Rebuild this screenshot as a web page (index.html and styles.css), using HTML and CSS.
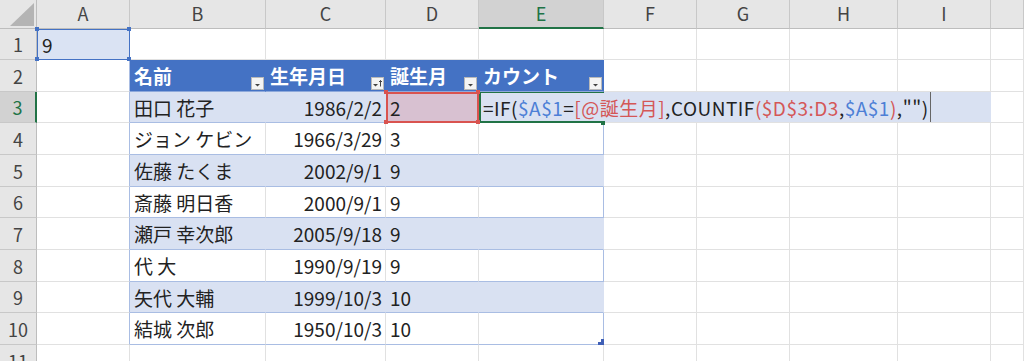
FILE: index.html
```html
<!doctype html>
<html lang="ja">
<head>
    <meta charset="UTF-8" />
    <title>COUNTIF 誕生月</title>
    <link rel="stylesheet" href="styles.css">
</head>
<body>

<div class="sheet">
	<!-- column headers -->
	<div class="corner"><svg width="36" height="28"><polygon points="10,26 34,26 34,3" fill="#b4b4b4"/></svg></div>
	<div class="ch">A</div><div class="ch">B</div><div class="ch">C</div><div class="ch">D</div>
	<div class="ch sel">E</div><div class="ch">F</div><div class="ch">G</div><div class="ch">H</div>
	<div class="ch">I</div><div class="ch"></div>

	<!-- row 1 -->
	<div class="rh">1</div>
	<div class="ref-a">9</div>
	<div></div><div></div><div></div><div></div><div></div><div></div><div></div><div></div><div></div>

	<!-- row 2 : table header -->
	<div class="rh">2</div>
	<div class="tl"></div>
	<div class="th">名前<span class="fb"><svg width="11" height="11"><path d="M3 6h5l-2.5 2.5z" fill="#444"/></svg></span></div>
	<div class="th">生年月日<span class="fb"><svg width="11" height="11"><path d="M1 6h5l-2.5 2.5z" fill="#444"/><path d="M8.5 8.5v-6M7 4l1.5-1.5 1.5 1.5" stroke="#444" fill="none"/></svg></span></div>
	<div class="th">誕生月<span class="fb"><svg width="11" height="11"><path d="M3 6h5l-2.5 2.5z" fill="#444"/></svg></span></div>
	<div class="th">カウント<span class="fb"><svg width="11" height="11"><path d="M3 6h5l-2.5 2.5z" fill="#444"/></svg></span></div>
	<div></div><div></div><div></div><div></div><div></div>

	<!-- row 3 : editing E3 -->
	<div class="rh sel">3</div>
	<div class="tl"></div>
	<div class="band">田口 花子</div>
	<div class="band num">1986/2/2</div>
	<div class="ref-d">2</div>
	<div class="edit"><span class="f">=IF(<span class="blue">$A$1</span>=<span class="red">[@誕生月]</span>,COUNTIF<span class="red">(</span><span class="red">$D$3:D3</span>,<span class="blue">$A$1</span><span class="red">)</span>,"")</span><span class="caret"></span></div>
	<div></div>

	<!-- row 4 -->
	<div class="rh">4</div>
	<div class="tl"></div>
	<div class="tw">ジョン ケビン</div>
	<div class="tw num">1966/3/29</div>
	<div class="tw">3</div>
	<div class="tw tr"></div>
	<div></div><div></div><div></div><div></div><div></div>

	<!-- row 5 -->
	<div class="rh">5</div>
	<div class="tl"></div>
	<div class="band">佐藤 たくま</div>
	<div class="band num">2002/9/1</div>
	<div class="band">9</div>
	<div class="band tr"></div>
	<div></div><div></div><div></div><div></div><div></div>

	<!-- row 6 -->
	<div class="rh">6</div>
	<div class="tl"></div>
	<div class="tw">斎藤 明日香</div>
	<div class="tw num">2000/9/1</div>
	<div class="tw">9</div>
	<div class="tw tr"></div>
	<div></div><div></div><div></div><div></div><div></div>

	<!-- row 7 -->
	<div class="rh">7</div>
	<div class="tl"></div>
	<div class="band">瀬戸 幸次郎</div>
	<div class="band num">2005/9/18</div>
	<div class="band">9</div>
	<div class="band tr"></div>
	<div></div><div></div><div></div><div></div><div></div>

	<!-- row 8 -->
	<div class="rh">8</div>
	<div class="tl"></div>
	<div class="tw">代 大</div>
	<div class="tw num">1990/9/19</div>
	<div class="tw">9</div>
	<div class="tw tr"></div>
	<div></div><div></div><div></div><div></div><div></div>

	<!-- row 9 -->
	<div class="rh">9</div>
	<div class="tl"></div>
	<div class="band">矢代 大輔</div>
	<div class="band num">1999/10/3</div>
	<div class="band">10</div>
	<div class="band tr"></div>
	<div></div><div></div><div></div><div></div><div></div>

	<!-- row 10 -->
	<div class="rh">10</div>
	<div class="tl"></div>
	<div class="tw">結城 次郎</div>
	<div class="tw num">1950/10/3</div>
	<div class="tw">10</div>
	<div class="tw tr resize"></div>
	<div></div><div></div><div></div><div></div><div></div>

	<!-- row 11 -->
	<div class="rh">11</div>
	<div></div><div></div><div></div><div></div><div></div><div></div><div></div><div></div><div></div><div></div>
</div>

</body>
</html>
```

FILE: styles.css
```css
body {
	margin: 0;
	font-family: "Noto Sans CJK JP", "Noto Sans", sans-serif;
	font-size: 19px;
	color: #222;
	background: #fff;
	overflow: hidden;
}
.sheet {
	display: grid;
	grid-template-columns: 37px 93px 136px 120px 93px 125px 93px 93px 108px 93px 1fr;
	grid-template-rows: 29px 31px 32px 31px 32px 32px 31px 32px 32px 31px 32px 32px;
}
.sheet > div {
	box-sizing: border-box;
	border-right: 1px solid #e1e1e1;
	border-bottom: 1px solid #e1e1e1;
	display: flex;
	align-items: center;
	white-space: nowrap;
	padding: 0 4px;
	min-width: 0;
}

/* headers */
.corner {
	background: #e6e6e6;
	padding: 0 !important;
	border-right-color: #bdbdbd !important;
	border-bottom-color: #bdbdbd !important;
}
.ch {
	background: #e6e6e6;
	justify-content: center;
	font-size: 18px;
	color: #444;
	padding-bottom: 2px !important;
	border-right-color: #c8c8c8 !important;
	border-bottom-color: #bdbdbd !important;
}
.ch.sel {
	background: #d2d2d2;
	color: #217346;
	border-bottom: 2px solid #217346 !important;
}
.rh {
	background: #e6e6e6;
	justify-content: center;
	font-size: 18px;
	color: #444;
	border-right-color: #bdbdbd !important;
	border-bottom-color: #c8c8c8 !important;
}
.rh.sel {
	background: #d2d2d2;
	color: #217346;
	border-right: 2px solid #217346 !important;
}

/* table */
.tl { border-right-color: #a9bde3 !important; }
.tr { border-right-color: #a9bde3 !important; }
.th {
	background: #4472c4;
	color: #fff;
	font-weight: bold;
	border-right-color: #4472c4 !important;
	border-bottom-color: #8ea9db !important;
	padding-right: 1px !important;
}
.band {
	background: #d9e1f2;
	border-right-color: #d9e1f2 !important;
	border-bottom-color: #a9bde3 !important;
}
.tw { border-bottom-color: #a9bde3 !important; }
.num {
	justify-content: flex-end;
	padding-right: 3px !important;
}
.fb {
	margin-left: auto;
	align-self: flex-end;
	margin-bottom: 1px;
	width: 13px;
	height: 13px;
	box-sizing: border-box;
	border: 1px solid #b9b9b9;
	background: #f4f4f4;
	display: flex;
}

/* referenced cells */
.ref-a {
	position: relative;
	z-index: 2;
	background: #dae3f3;
	border: 1px solid #4472c4 !important;
}
.ref-a::after {
	content: "";
	position: absolute;
	left: -3px;
	top: -3px;
	width: 4px;
	height: 4px;
	background: #4472c4;
	box-shadow: 92px 0 0 #4472c4, 0 30px 0 #4472c4, 92px 30px 0 #4472c4;
}
.ref-d {
	position: relative;
	z-index: 2;
	background: #d8c1d1;
	border: 2px solid #d9534f !important;
	padding-left: 2px !important;
}
.ref-d::after {
	content: "";
	position: absolute;
	left: -4px;
	top: -4px;
	width: 4px;
	height: 4px;
	background: #d9534f;
	box-shadow: 92px 0 0 #d9534f, 0 30px 0 #d9534f, 92px 30px 0 #d9534f;
}

/* cell in edit mode */
.edit {
	grid-column: 6 / 11;
	position: relative;
	background: #d9e1f2;
	border-right-color: #d9e1f2 !important;
}
.edit::before {
	content: "";
	position: absolute;
	left: 0;
	top: 0;
	bottom: -1px;
	width: 125px;
	box-sizing: border-box;
	border: solid #217346;
	border-width: 1px 0 2px 2px;
}
.edit::after {
	content: "";
	position: absolute;
	left: 122px;
	bottom: -3px;
	width: 4px;
	height: 4px;
	background: #217346;
}
.f { letter-spacing: 0.5px; }
.blue { color: #4d7fd6; }
.red { color: #d45757; }
.caret {
	align-self: stretch;
	width: 0;
	margin-left: 1px;
	border-left: 1px solid #666;
}

.resize { position: relative; }
.resize::after {
	content: "";
	position: absolute;
	right: -1px;
	bottom: -1px;
	width: 6px;
	height: 6px;
	background: #3f5fb6;
	clip-path: polygon(100% 0, 100% 100%, 0 100%, 0 50%, 50% 50%, 50% 0);
}
```
